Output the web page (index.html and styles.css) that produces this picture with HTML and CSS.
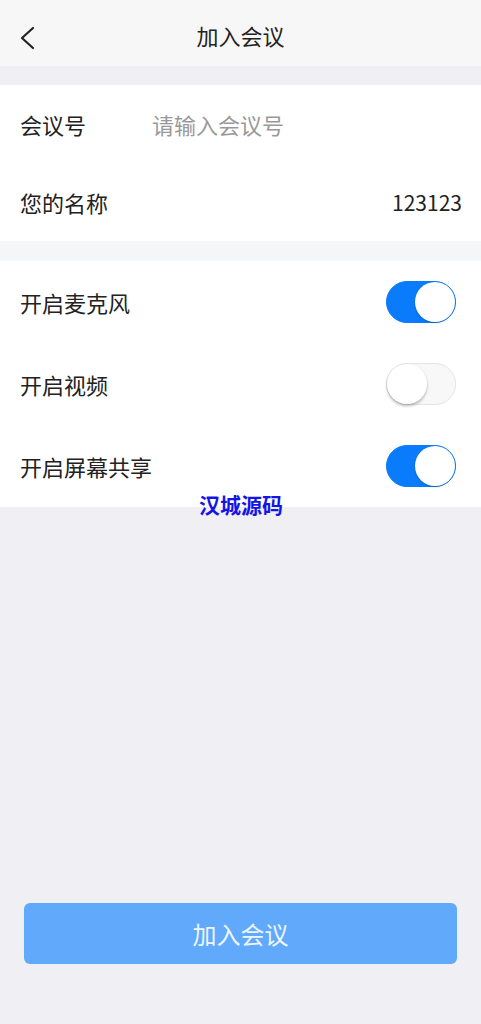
FILE: index.html
```html
<!DOCTYPE html>
<html lang="zh">
<head>
    <meta charset="UTF-8">
    <title>加入会议</title>
    <link rel="stylesheet" href="styles.css">
</head>
<body>
    <div class="page">
        <div class="header">
            <svg class="back" width="18" height="24" viewBox="0 0 18 24">
                <path d="M15 2 L4 12 L15 22" fill="none" stroke="#222" stroke-width="2.2" stroke-linecap="round" stroke-linejoin="round"/>
            </svg>
            <div class="title">加入会议</div>
        </div>

        <div class="group first">
            <div class="row short">
                <span class="label">会议号</span>
                <span class="placeholder">请输入会议号</span>
            </div>
            <div class="row short">
                <span class="label">您的名称</span>
                <span class="value">123123</span>
            </div>
        </div>

        <div class="group second">
            <div class="row">
                <span class="label">开启麦克风</span>
                <span class="switch on"><span class="knob"></span></span>
            </div>
            <div class="row">
                <span class="label">开启视频</span>
                <span class="switch"><span class="knob"></span></span>
            </div>
            <div class="row">
                <span class="label">开启屏幕共享</span>
                <span class="switch on"><span class="knob"></span></span>
            </div>
            <div class="mark">汉城源码</div>
        </div>

        <div class="spacer"></div>

        <div class="footer">
            <div class="join">加入会议</div>
        </div>
    </div>
</body>
</html>
```

FILE: styles.css
```css
html, body {
    padding:0px;
    margin:0px;
    background: #efeff4;
    font-family: "Noto Sans CJK SC", "Noto Sans", sans-serif;
    color: #222;
}

.page {
    height:1024px;
    display:flex;
    flex-direction:column;
}

.header {
    height:66px;
    background:#f7f7f7;
    display:flex;
    align-items:center;
    justify-content:center;
    position:relative;
}

.back {
    position:absolute;
    left:18px;
    top:26px;
}

.title {
    font-size:22px;
    margin-top:3px;
}

.group {
    background:white;
    position:relative;
}

.group.first {
    margin-top:19px;
}

.group.second {
    border-top:20px solid #f5f6f8;
}

.row {
    height:82px;
    padding:0px 25px 0px 20px;
    display:flex;
    align-items:center;
    font-size:22px;
}

.row.short {
    height:78px;
}

.label {
    width:132px;
}

.placeholder {
    color:#999;
}

.value {
    margin-left:auto;
    margin-right:-6px;
    font-size:21px;
}

.switch {
    margin-left:auto;
    width:70px;
    height:42px;
    box-sizing:border-box;
    border-radius:21px;
    background:#f8f8f8;
    border:1px solid #e4e4e4;
    position:relative;
}

.switch .knob {
    position:absolute;
    top:0px;
    left:0px;
    width:40px;
    height:40px;
    border-radius:50%;
    background:white;
    box-shadow:0px 2px 3px rgba(0,0,0,0.28);
}

.switch.on {
    background:#0a7cfb;
    border-color:#0a7cfb;
}

.switch.on .knob {
    left:28px;
    box-shadow:0px 1px 2px rgba(0,0,0,0.2);
}

.mark {
    position:absolute;
    left:199px;
    bottom:-8px;
    color:#1414e6;
    font-weight:bold;
    font-size:21px;
    line-height:22px;
}

.spacer {
    flex:1;
}

.footer {
    padding:0px 24px 60px 24px;
}

.join {
    height:61px;
    border-radius:6px;
    background:#61a9fb;
    color:#eef5ff;
    font-size:24px;
    display:flex;
    align-items:center;
    justify-content:center;
}
```
